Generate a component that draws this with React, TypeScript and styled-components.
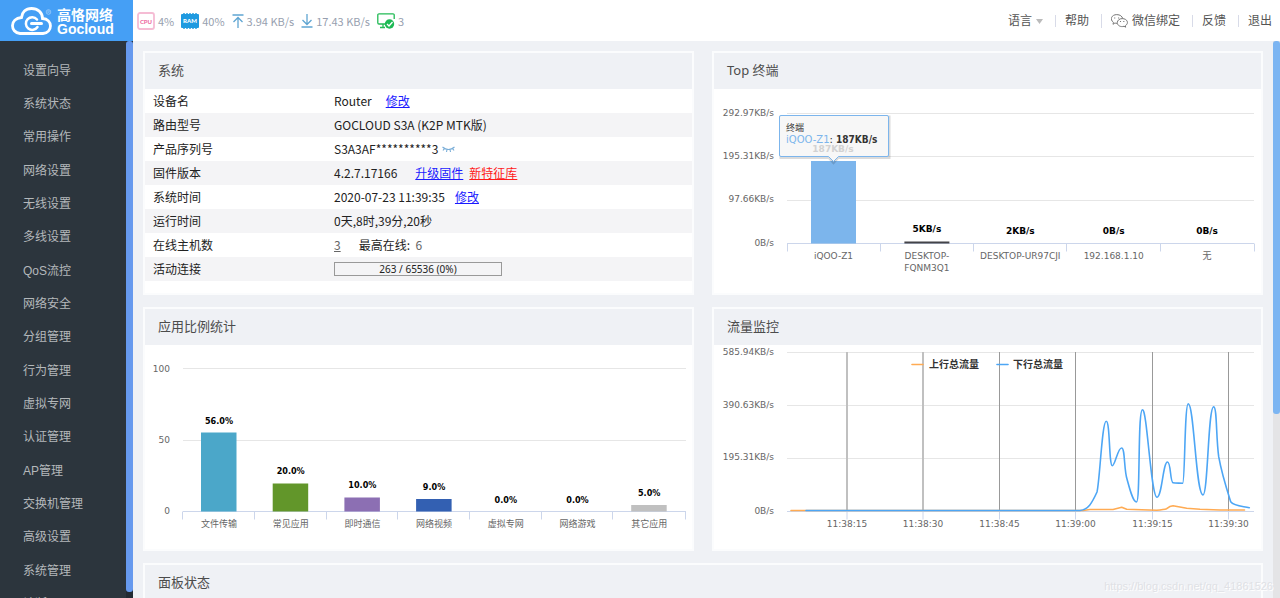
import React from 'react';
import styled, { createGlobalStyle } from 'styled-components';

const uiFont = '"Noto Sans", "Noto Sans CJK SC", sans-serif';
const dataFont = '"Noto Sans CJK SC", "Noto Sans", sans-serif';
const menuFont = '"Liberation Sans", "Noto Sans CJK SC", sans-serif';
const chartFont = '"DejaVu Sans", "Noto Sans CJK SC", sans-serif';
const chartBoldFont = '"DejaVu Sans Condensed", "DejaVu Sans", "Noto Sans CJK SC", sans-serif';

const GlobalStyle = createGlobalStyle`
  * { box-sizing: border-box; }
  body { margin: 0; background: #eff1f5; font: 12px/24px ${dataFont}; color: #222; }
`;

const Shell = styled.div`
  display: flex;
  height: 100vh;
  overflow: hidden;
`;

const Sidebar = styled.aside`
  display: flex;
  flex-direction: column;
  flex: 0 0 133px;
  background: #2c353d;
`;

const Brand = styled.a`
  display: flex;
  align-items: center;
  gap: 5px;
  flex: 0 0 41px;
  padding: 2px 0 0 11px;
  background: #459ff5;
  color: #fff;
  text-decoration: none;
`;

const BrandText = styled.span`
  display: flex;
  flex-direction: column;
  font: bold 14px/14px ${menuFont};
  white-space: nowrap;
`;

const MenuArea = styled.div`
  display: flex;
  flex: 1;
  min-height: 0;
`;

const Menu = styled.ul`
  flex: 1;
  margin: 0;
  padding: 14px 0 0;
  list-style: none;
  overflow: hidden;
  font-family: ${menuFont};

  li:nth-child(3n) { margin-bottom: 1px; }
`;

const MenuLink = styled.a`
  display: block;
  padding-left: 23px;
  line-height: 33px;
  color: #b4b8bb;
  text-decoration: none;
`;

const Track = styled.div<{ $color: string }>`
  display: flex;
  flex-direction: column;
  flex: 0 0 7px;
  background: ${p => p.$color};
`;

const Thumb = styled.div<{ $color: string; $length: string }>`
  height: ${p => p.$length};
  border-radius: 3px;
  background: ${p => p.$color};
`;

const Content = styled.div`
  display: flex;
  flex-direction: column;
  flex: 1;
  min-width: 0;
`;

const TopBar = styled.header`
  display: flex;
  align-items: center;
  justify-content: space-between;
  flex: 0 0 41px;
  padding: 1px 8px 0 4px;
  background: #fff;
`;

const StatusList = styled.div`
  display: flex;
  align-items: center;
  gap: 7px;
`;

const Status = styled.span`
  display: flex;
  align-items: center;
  gap: 3px;
  font-size: 11px;
  color: #979faf;
  white-space: nowrap;
`;

const TopNav = styled.nav`
  display: flex;
  align-items: center;
`;

const navItem = `
  display: flex;
  align-items: center;
  gap: 4px;
  border: 0;
  padding: 0;
  background: none;
  font: 12px/12px ${uiFont};
  color: #555;
  text-decoration: none;
  cursor: pointer;
`;

const NavButton = styled.button`${navItem}`;

const NavLink = styled.a`
  ${navItem}
  margin-left: 12px;
  border-left: 1px solid #d8dbe8;
  padding-left: 9px;
`;

const Workspace = styled.div`
  display: flex;
  flex: 1;
  min-height: 0;
`;

const Panels = styled.main`
  display: grid;
  grid-template-columns: minmax(0, 1fr) minmax(0, 1fr);
  align-content: start;
  gap: 12px 18px;
  flex: 1;
  min-width: 0;
  padding: 10px;
  overflow: hidden;
`;

const Panel = styled.section<{ $wide?: boolean }>`
  grid-column: ${p => (p.$wide ? '1 / -1' : 'auto')};
  min-height: 244px;
  border: 2px solid #fbfcfd;
  background: #fff;
`;

const PanelTitle = styled.h2`
  margin: 0;
  padding: 0 0 2px 13px;
  background: #eff1f5;
  font: 13px/34px ${uiFont};
  color: #4c4c4c;
`;

const InfoTable = styled.table`
  width: 100%;
  border-collapse: collapse;

  tr:nth-child(even) { background: #f4f4f6; }
  th { width: 189px; height: 24px; padding: 0 0 0 8px; font-weight: normal; text-align: left; }
  td { padding: 0; }
`;

const Values = styled.div<{ $gap?: number }>`
  display: flex;
  align-items: center;
  gap: ${p => p.$gap ?? 14}px;
  white-space: nowrap;
`;

const TextLink = styled.a<{ $color?: string }>`
  color: ${p => p.$color ?? '#1a1aff'};
`;

const Muted = styled.span`
  color: #666;
`;

const Meter = styled.div`
  width: 168px;
  border: 1px solid #999;
  font: 10px/12px ${uiFont};
  text-align: center;
`;

const Chart = styled.svg`
  display: block;
  width: 100%;
  height: auto;
  font-family: ${chartFont};
  font-size: 9px;
  fill: #666;
`;

const BarLabel = styled.text<{ $narrow?: boolean }>`
  font: bold 9px ${p => (p.$narrow ? chartBoldFont : chartFont)};
  fill: #000;
  text-anchor: middle;
`;

const Watermark = styled.span`
  position: absolute;
  right: 7px;
  bottom: 0;
  font: 11px/24px ${menuFont};
  color: #dfe1e5;
  text-shadow: 1px 1px 0 #fff;
`;

const menuItems = [
  '设置向导', '系统状态', '常用操作', '网络设置', '无线设置', '多线设置', 'QoS流控', '网络安全', '分组管理',
  '行为管理', '虚拟专网', '认证管理', 'AP管理', '交换机管理', '高级设置', '系统管理', '诊断',
];

const CloudLogo = () => (
  <svg width="41" height="29" viewBox="0 0 41 29" fill="none" stroke="#fff" aria-hidden="true">
    <path d="M9 26.5H32C42 25.500 42 12 31.500 11.500C31.500 5 26.500 1.500 20.500 1.500C14.500 1.500 11 5.500 10.500 10.500C-1.500 11.500 -1 25.500 9 26.500Z" strokeWidth="2.800" />
    <path d="M26 12.500A6.300 6.300 0 1 0 26.500 20" strokeWidth="2.500" strokeLinecap="round" />
    <path d="M20.500 16.500H30.500" strokeWidth="3" strokeLinecap="round" />
    <circle cx="37.500" cy="5" r="2.300" strokeWidth=".6" opacity=".6" />
    <path d="M36.800 6.300V3.800h.9a.6.600 0 0 1 0 1.300h-.9M37.800 5.100l.7 1.200" strokeWidth=".4" opacity=".6" />
  </svg>
);

const CpuIcon = () => (
  <svg width="18" height="18" viewBox="0 0 18 18" aria-hidden="true">
    <rect x="1" y="1" width="16" height="16" rx="2" fill="#fff" stroke="#f5bcd4" strokeWidth="1.800" />
    <text x="9" y="11.500" textAnchor="middle" fontFamily="Lato" fontWeight="900" fontSize="6" fill="#ee6fa4">CPU</text>
  </svg>
);

const RamIcon = () => (
  <svg width="18" height="18" viewBox="0 0 18 18" aria-hidden="true">
    <path d="M3 1v16M6 1v16M9 1v16M12 1v16M15 1v16" stroke="#2a9fe0" strokeWidth="1.500" />
    <rect y="2" width="18" height="14" rx="1" fill="#1f9ae0" />
    <text x="9" y="11" textAnchor="middle" fontFamily="Lato" fontWeight="900" fontSize="6" fill="#fff">RAM</text>
  </svg>
);

const UploadIcon = () => (
  <svg width="12" height="14" viewBox="0 0 12 14" fill="none" stroke="#5fa5d2" strokeWidth="1.300" aria-hidden="true">
    <path d="M.5 1h11M6 14V3.500M1.500 8L6 3.500L10.500 8" />
  </svg>
);

const DownloadIcon = () => (
  <svg width="12" height="14" viewBox="0 0 12 14" fill="none" stroke="#5fa5d2" strokeWidth="1.300" aria-hidden="true">
    <path d="M.5 13h11M6 0V10.500M1.500 6L6 10.500L10.500 6" />
  </svg>
);

const HostsIcon = () => (
  <svg width="18" height="16" viewBox="0 0 18 16" fill="none" stroke="#22bb55" aria-hidden="true">
    <path d="M8 11H2A1.200 1.200 0 0 1 .8 9.800V2A1.200 1.200 0 0 1 2 .8H16A1.200 1.200 0 0 1 17.200 2V6M3 14.500H8M6 11V14.500" strokeWidth="1.300" />
    <circle cx="12.500" cy="11" r="4.700" fill="#1db954" stroke="none" />
    <path d="M10 11l2 2 3.500-4" stroke="#fff" strokeWidth="1.300" />
  </svg>
);

const WechatIcon = () => (
  <svg width="17" height="14" viewBox="0 0 17 14" fill="none" stroke="#777" strokeWidth="1" aria-hidden="true">
    <path d="M6 9.300C5 9.300 4.500 9.200 3.900 9L2 10.300L2.400 8.300C-1.500 5.500 .5 .6 5.800 .6C9 .6 11.300 2.400 11.700 4.500" />
    <path d="M14.300 11.800L14.700 13.200L13 12.300C9.500 13.300 6.300 11.500 6.300 8.700C6.300 6.300 8.500 4.600 11.200 4.600C16.300 4.600 18.300 9.200 14.300 11.800Z" />
    <path d="M3.700 3.400v1M7.600 3.400v1M9.500 7v1M12.800 7v1" strokeWidth="1.100" />
  </svg>
);

const ClosedEyeIcon = () => (
  <svg width="13" height="7" viewBox="0 0 13 7" fill="none" stroke="#7aaed8" strokeWidth="1.100" aria-hidden="true">
    <path d="M.5 1Q6.500 6 12.500 1M2.300 2.500L1 4.500M5 3.500L4.500 6M8 3.500L8.500 6M10.700 2.500L12 4.500" />
  </svg>
);

const Caret = () => (
  <svg width="7" height="5" viewBox="0 0 7 5" aria-hidden="true"><path d="M0 0H7L3.500 5Z" fill="#bbb" /></svg>
);

interface AxisProps { left: number; right: number; grid: number[]; base: number; ticks: number[] }

const Axes = ({ left, right, grid, base, ticks }: AxisProps) => (
  <>
    <path d={grid.map(y => `M${left} ${y}H${right}`).join('')} stroke="#e6e6e6" fill="none" />
    <path d={`M${left} ${base}H${right}` + ticks.map(x => `M${x} ${base}v8`).join('')} stroke="#ccd6eb" fill="none" />
  </>
);

const YLabels = ({ x, items }: { x: number; items: [string, number][] }) => (
  <g textAnchor="end">
    {items.map(([label, y]) => <text key={label} x={x} y={y}>{label}</text>)}
  </g>
);

const terminals = [
  { lines: ['iQOO-Z1'], label: '', top: 72, color: '#7cb5ec' },
  { lines: ['DESKTOP-', 'FQNM3Q1'], label: '5KB/s', top: 152.5, color: '#434348' },
  { lines: ['DESKTOP-UR97CJI'], label: '2KB/s', top: 154.5, color: '#90ed7d' },
  { lines: ['192.168.1.10'], label: '0B/s', top: 154.5, color: '#f7a35c' },
  { lines: ['无'], label: '0B/s', top: 154.5, color: '#8085e9' },
];

const TerminalChart = () => (
  <Chart viewBox="0 0 547 204" role="img" aria-label="Top 终端">
    <Axes left={73} right={540} grid={[24.5, 67.5, 111.5]} base={154.5} ticks={[73.5, 166.5, 259.5, 352.5, 446.5, 540.5]} />
    <YLabels x={60} items={[['292.97KB/s', 27], ['195.31KB/s', 70], ['97.66KB/s', 113], ['0B/s', 157]]} />
    {terminals.map((t, i) => {
      const cx = 119.5 + i * 93.4;
      return (
        <g key={t.lines[0]}>
          <rect x={cx - 22.5} y={t.top} width="45" height={154.5 - t.top} fill={t.color} />
          <BarLabel x={cx} y={i === 1 ? 143 : 145}>{t.label}</BarLabel>
          <g textAnchor="middle">
            {t.lines.map((line, n) => <text key={line} x={cx} y={170 + n * 12}>{line}</text>)}
          </g>
        </g>
      );
    })}
    <path d="M67 28H175V68.500H124L119.500 73.500L115 68.500H67Z" fill="none" stroke="#000" strokeOpacity=".14" strokeWidth="3" />
    <path d="M67 26.500H173Q174.500 26.500 174.500 28V66Q174.500 67.500 173 67.500H124.500L119.500 72.500L114.500 67.500H67Q65.500 67.500 65.500 66V28Q65.500 26.500 67 26.500Z" fill="#f7f7f7" stroke="#7cb5ec" />
    <text x="119" y="63" textAnchor="middle" fontWeight="bold" fontSize="9" fill="#d2d2d2">187KB/s</text>
    <text x="72" y="42" fill="#333">终端</text>
    <text x="72" y="54" fontSize="10" fill="#333">
      <tspan fill="#7cb5ec">iQOO-Z1</tspan>: <tspan fontWeight="bold" fontFamily="DejaVu Sans Condensed, DejaVu Sans">187KB/s</tspan>
    </text>
  </Chart>
);

const shares = [
  { name: '文件传输', label: '56.0%', top: 87.5, labelY: 79, color: '#4ba7c9' },
  { name: '常见应用', label: '20.0%', top: 138.5, labelY: 129, color: '#62962a' },
  { name: '即时通信', label: '10.0%', top: 152.5, labelY: 143, color: '#8c6fb3' },
  { name: '网络视频', label: '9.0%', top: 154, labelY: 145, color: '#3360b2' },
  { name: '虚拟专网', label: '0.0%', top: 166.5, labelY: 158, color: '#999' },
  { name: '网络游戏', label: '0.0%', top: 166.5, labelY: 158, color: '#999' },
  { name: '其它应用', label: '5.0%', top: 160, labelY: 151, color: '#c0c0c0' },
];

const ShareChart = () => (
  <Chart viewBox="0 0 547 204" role="img" aria-label="应用比例统计">
    <Axes left={38} right={541} grid={[23.5, 95.5]} base={166.5} ticks={[37.5, 109.5, 181.5, 252.5, 324.5, 396.5, 467.5, 540.5]} />
    <YLabels x={25} items={[['100', 27], ['50', 98], ['0', 169]]} />
    {shares.map((s, i) => {
      const cx = 74 + i * 71.700;
      return (
        <g key={s.name}>
          <rect x={cx - 18} y={s.top} width="35.500" height={166.5 - s.top} fill={s.color} />
          <BarLabel $narrow x={cx} y={s.labelY}>{s.label}</BarLabel>
          <text x={cx} y="182" textAnchor="middle">{s.name}</text>
        </g>
      );
    })}
  </Chart>
);

const times: [string, number][] = [
  ['11:38:15', 133], ['11:38:30', 209], ['11:38:45', 285.5], ['11:39:00', 361.5], ['11:39:15', 438.5], ['11:39:30', 514.5],
];

const TrafficChart = () => (
  <Chart viewBox="0 0 547 204" role="img" aria-label="流量监控">
    <Axes left={73} right={540} grid={[7.5, 60.5, 113.5]} base={166.5} ticks={times.map(t => t[1])} />
    <YLabels x={60} items={[['585.94KB/s', 10], ['390.63KB/s', 63], ['195.31KB/s', 115], ['0B/s', 169]]} />
    {times.map(([label, x], i) => (
      <g key={label}>
        <path d={`M${x} 7V166`} stroke={i < 2 ? '#c0c0c0' : '#999'} strokeWidth={i < 2 ? 2 : 1} />
        <text x={x} y="182" textAnchor="middle">{label}</text>
      </g>
    ))}
    <g fill="none" strokeWidth="1.600" strokeLinecap="round" strokeLinejoin="round">
      <path stroke="#ffab53" d="M77 165.500H369L376 164.500L399 164.500L407.700 162.300L412.700 164.300L442.700 165.300Q450 164.500 452.700 163.700Q456 160.700 459 160.700L472.700 163.300L486 164.300L506 165L530.500 165" />
      <path stroke="#4da6f5" d="M92 165.500H366C374 165 378 158 383 147C386 134 388 76 392.300 76.300C396 76 395 121 398.300 120.700C401 121 404 102 407.700 103C411 103 410 125 413 134C416 145 419 157 422.500 157C426.500 157 423.500 65 428.500 64.700C433 64 437 152 443 152.300C448 152 449 117 453.500 117C457 117 456 137 459 137.700C461 138.300 466 138 468.700 138.300C471 138 470.500 58.700 474.300 58.700C480 59 482 150 489 150C494 150 494 61.700 499.700 61.700C503 62 502 92 504.700 111.700C508 130 513 145 516.700 156.700C520 161 527 161 535.300 162.700" />
      <path stroke="#ffab53" d="M198 19.500H209" />
      <path stroke="#4da6f5" d="M283 19.500H294" />
    </g>
    <g fontWeight="bold" fontSize="10" fill="#333">
      <text x="215" y="23">上行总流量</text>
      <text x="299" y="23">下行总流量</text>
    </g>
  </Chart>
);

export default function App() {
  return (
    <Shell>
      <GlobalStyle />
      <Sidebar>
        <Brand href="#">
          <CloudLogo />
          <BrandText><span>高恪网络</span><span>Gocloud</span></BrandText>
        </Brand>
        <MenuArea>
          <Menu>
            {menuItems.map(item => <li key={item}><MenuLink href="#">{item}</MenuLink></li>)}
          </Menu>
          <Track $color="#222a32"><Thumb $color="#6699ee" $length="99%" /></Track>
        </MenuArea>
      </Sidebar>
      <Content>
        <TopBar>
          <StatusList>
            <Status><CpuIcon />4%</Status>
            <Status><RamIcon />40%</Status>
            <Status><UploadIcon />3.94 KB/s</Status>
            <Status><DownloadIcon />17.43 KB/s</Status>
            <Status><HostsIcon />3</Status>
          </StatusList>
          <TopNav>
            <NavButton type="button">语言<Caret /></NavButton>
            <NavLink href="#">帮助</NavLink>
            <NavLink href="#"><WechatIcon />微信绑定</NavLink>
            <NavLink href="#">反馈</NavLink>
            <NavLink href="#">退出</NavLink>
          </TopNav>
        </TopBar>
        <Workspace>
          <Panels>
            <Panel>
              <PanelTitle>系统</PanelTitle>
              <InfoTable>
                <tbody>
                  <tr><th scope="row">设备名</th><td><Values>Router <TextLink href="#">修改</TextLink></Values></td></tr>
                  <tr><th scope="row">路由型号</th><td>GOCLOUD S3A (K2P MTK版)</td></tr>
                  <tr><th scope="row">产品序列号</th><td><Values $gap={4}>S3A3AF**********3 <ClosedEyeIcon /></Values></td></tr>
                  <tr>
                    <th scope="row">固件版本</th>
                    <td>
                      <Values $gap={18}>
                        4.2.7.17166
                        <Values $gap={6}>
                          <TextLink href="#">升级固件</TextLink>
                          <TextLink href="#" $color="#ff1a1a">新特征库</TextLink>
                        </Values>
                      </Values>
                    </td>
                  </tr>
                  <tr><th scope="row">系统时间</th><td><Values $gap={10}>2020-07-23 11:39:35 <TextLink href="#">修改</TextLink></Values></td></tr>
                  <tr><th scope="row">运行时间</th><td>0天,8时,39分,20秒</td></tr>
                  <tr>
                    <th scope="row">在线主机数</th>
                    <td><Values $gap={18}><TextLink href="#" $color="#666">3</TextLink><span>最高在线:&nbsp; <Muted>6</Muted></span></Values></td>
                  </tr>
                  <tr><th scope="row">活动连接</th><td><Meter>263 / 65536 (0%)</Meter></td></tr>
                </tbody>
              </InfoTable>
            </Panel>
            <Panel><PanelTitle>Top 终端</PanelTitle><TerminalChart /></Panel>
            <Panel><PanelTitle>应用比例统计</PanelTitle><ShareChart /></Panel>
            <Panel><PanelTitle>流量监控</PanelTitle><TrafficChart /></Panel>
            <Panel $wide><PanelTitle>面板状态</PanelTitle></Panel>
          </Panels>
          <Track $color="#e4e4e6"><Thumb $color="#7cb5f2" $length="67%" /></Track>
        </Workspace>
      </Content>
      <Watermark>https://blog.csdn.net/qq_41861526</Watermark>
    </Shell>
  );
}
